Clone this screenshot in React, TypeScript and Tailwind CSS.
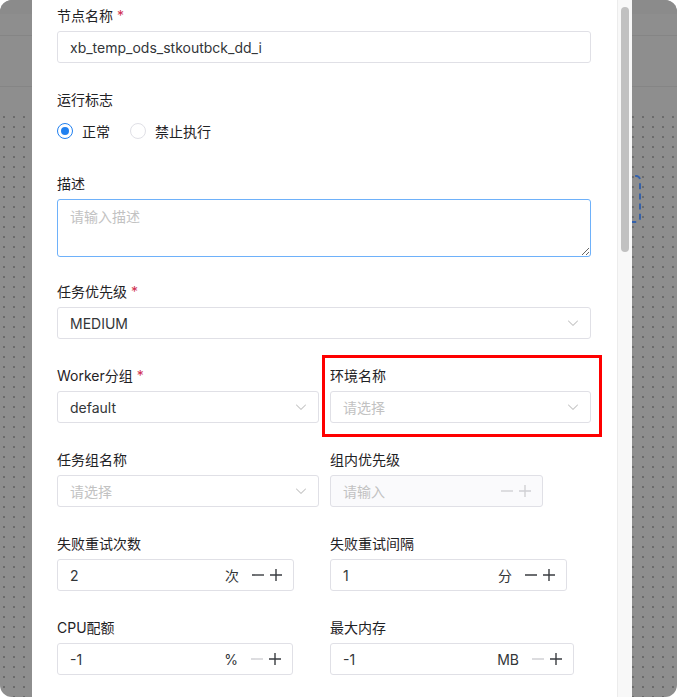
import React from "react";

const ChevronDown = () => (
  <svg width="16" height="16" viewBox="0 0 16 16" fill="#c2c2c2">
    <path d="M3.14645 5.64645C3.34171 5.45118 3.65829 5.45118 3.85355 5.64645L8 9.79289L12.1464 5.64645C12.3417 5.45118 12.6583 5.45118 12.8536 5.64645C13.0488 5.84171 13.0488 6.15829 12.8536 6.35355L8.35355 10.8536C8.15829 11.0488 7.84171 11.0488 7.64645 10.8536L3.14645 6.35355C2.95118 6.15829 2.95118 5.84171 3.14645 5.64645Z" />
  </svg>
);

const Minus = ({ off }: { off?: boolean }) => (
  <svg width="16" height="16" viewBox="0 0 16 16">
    <path d="M2 8h12" stroke={off ? "#d0d0d4" : "#3a3d41"} strokeWidth="1.4" />
  </svg>
);

const Plus = ({ off }: { off?: boolean }) => (
  <svg width="16" height="16" viewBox="0 0 16 16">
    <path d="M2 8h12M8 2v12" stroke={off ? "#d0d0d4" : "#3a3d41"} strokeWidth="1.4" />
  </svg>
);

const Label = ({ text, required }: { text: string; required?: boolean }) => (
  <div className="h-[26px] pb-[4px] text-[14px] leading-[22px] text-[#1f2225]">
    {text}
    {required && <span className="text-[#d03050]">&nbsp;*</span>}
  </div>
);

const SelectBox = ({ value, placeholder }: { value?: string; placeholder?: string }) => (
  <div className="flex h-[32px] items-center rounded-[3px] border border-[#e0e0e6] bg-white pl-[12px] pr-[9px] text-[14px]">
    <span className={`flex-1 ${value ? "text-[#333639]" : "text-[#c2c2c2]"}`}>
      {value ?? placeholder}
    </span>
    <ChevronDown />
  </div>
);

type NumProps = {
  value?: string;
  placeholder?: string;
  suffix?: string;
  width: string;
  minusOff?: boolean;
  plusOff?: boolean;
  disabled?: boolean;
};

const NumberBox = ({ value, placeholder, suffix, width, minusOff, plusOff, disabled }: NumProps) => (
  <div
    className={`flex h-[32px] items-center rounded-[3px] border border-[#e0e0e6] pl-[12px] pr-[9px] text-[14px] ${width} ${
      disabled ? "bg-[#fafafc]" : "bg-white"
    }`}
  >
    <span className={`flex-1 ${value ? "text-[#333639]" : "text-[#c2c2c2]"}`}>
      {value ?? placeholder}
    </span>
    {suffix && <span className="mr-[11px] text-[#333639]">{suffix}</span>}
    <div className="flex items-center gap-[2px]">
      <Minus off={minusOff} />
      <Plus off={plusOff} />
    </div>
  </div>
);

const Radio = ({ label, checked }: { label: string; checked?: boolean }) => (
  <div className="flex items-center">
    <div
      className={`flex h-[16px] w-[16px] items-center justify-center rounded-full bg-white ${
        checked ? "border-[1.5px] border-[#2080f0]" : "border border-[#e0e0e6]"
      }`}
    >
      {checked && <div className="h-[8px] w-[8px] rounded-full bg-[#2080f0]" />}
    </div>
    <span className="ml-[9px] text-[14px] text-[#1f2225]">{label}</span>
  </div>
);

const Canvas = ({ children, dotsClass }: { children?: React.ReactNode; dotsClass: string }) => (
  <div className="relative flex h-full flex-col overflow-hidden">
    <div className="h-[14px] bg-[#8b8b8b]" />
    <div className="h-[22px] border-b border-[#858585]" />
    <div className="h-[51px] border-b border-[#858585]" />
    <div className={`mt-[25px] flex-1 bg-[length:10px_10px] bg-[radial-gradient(circle,#6b6b6b_0.7px,transparent_1px)] ${dotsClass}`} />
    {children}
  </div>
);

export default function App() {
  return (
    <div className="bg-white">
      <div className="flex h-[697px] w-[677px] overflow-hidden rounded-[12px] bg-[#8e8e8e] font-[Inter,'Noto_Sans_CJK_SC',sans-serif]">
        <div className="w-[32px]">
          <Canvas dotsClass="bg-[position:-1px_0px]" />
        </div>

        <div className="relative flex w-[600px] bg-white">
          <div className="w-[585px] pl-[25px] pr-[26px] pt-[5px]">
            <div className="mb-[26px]">
              <Label text="节点名称" required />
              <div className="flex h-[32px] items-center rounded-[3px] border border-[#e0e0e6] pl-[12px] text-[14px] text-[#333639]">
                xb_temp_ods_stkoutbck_dd_i
              </div>
            </div>

            <div className="mb-[26px]">
              <Label text="运行标志" />
              <div className="flex h-[32px] items-center gap-[20px]">
                <Radio label="正常" checked />
                <Radio label="禁止执行" />
              </div>
            </div>

            <div className="mb-[24px]">
              <Label text="描述" />
              <textarea
                placeholder="请输入描述"
                className="block h-[58px] w-full resize-y rounded-[3px] border border-[#6eb1fa] px-[12px] py-[6px] text-[14px] leading-[22px] text-[#333639] outline-none placeholder:text-[#c2c2c2]"
              />
            </div>

            <div className="mb-[26px]">
              <Label text="任务优先级" required />
              <SelectBox value="MEDIUM" />
            </div>

            <div className="grid grid-cols-[262px_261px] gap-x-[11px]">
              <div className="mb-[26px]">
                <Label text="Worker分组" required />
                <SelectBox value="default" />
              </div>
              <div className="mb-[26px]">
                <Label text="环境名称" />
                <SelectBox placeholder="请选择" />
              </div>

              <div className="mb-[26px]">
                <Label text="任务组名称" />
                <SelectBox placeholder="请选择" />
              </div>
              <div className="mb-[26px]">
                <Label text="组内优先级" />
                <NumberBox placeholder="请输入" width="w-[213px]" disabled minusOff plusOff />
              </div>

              <div className="mb-[26px]">
                <Label text="失败重试次数" />
                <NumberBox value="2" suffix="次" width="w-[237px]" />
              </div>
              <div className="mb-[26px]">
                <Label text="失败重试间隔" />
                <NumberBox value="1" suffix="分" width="w-[237px]" />
              </div>

              <div className="mb-[26px]">
                <Label text="CPU配额" />
                <NumberBox value="-1" suffix="%" width="w-[236px]" minusOff />
              </div>
              <div className="mb-[26px]">
                <Label text="最大内存" />
                <NumberBox value="-1" suffix="MB" width="w-[244px]" minusOff />
              </div>
            </div>
          </div>

          <div className="flex w-[15px] flex-col border-l border-[#ececec] bg-[#f8f8f8] pt-[7px]">
            <div className="mx-auto h-[245px] w-[8px] rounded-full bg-[#c1c1c1]" />
          </div>

          <div className="pointer-events-none absolute left-[290px] top-[355px] h-[82px] w-[280px] border-[3px] border-[#fe0000]" />
        </div>

        <div className="flex-1">
          <Canvas dotsClass="bg-[position:6px_0px]">
            <div className="absolute left-[-12px] top-[175px] h-[48px] w-[21px] rounded-[5px] border-2 border-dashed border-[#3461ab]" />
          </Canvas>
        </div>
      </div>
    </div>
  );
}
